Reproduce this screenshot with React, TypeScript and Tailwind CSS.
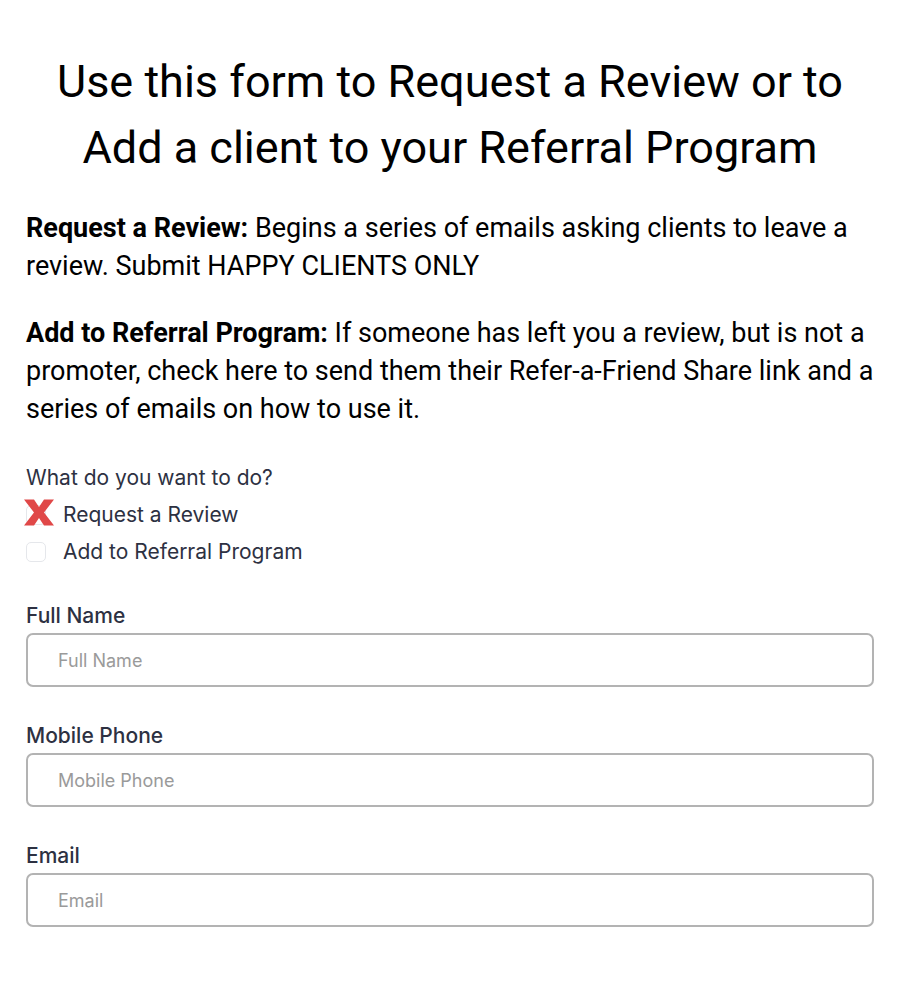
import { useState } from 'react';

const fields = [
    { id: 'name', label: 'Full Name', type: 'text' },
    { id: 'phone', label: 'Mobile Phone', type: 'tel' },
    { id: 'email', label: 'Email', type: 'email' },
];

const XMark = () => (
    <svg viewBox="0 0 30 26" className="absolute left-[-3px] top-[-7px] w-[30px] h-[27px]">
        <path d="M0 0 H10 L15 7.5 L20 0 H30 L20 13 L30 26 H20 L15 18.5 L10 26 H0 L10 13 Z" fill="#e04848" />
    </svg>
);

const App = () => {
    const [review, setReview] = useState(true);
    const [referral, setReferral] = useState(false);

    return (
        <div className="min-h-screen bg-white px-[26px] pt-[49px] pb-10">
            {/* Heading */}
            <h1 className="text-center font-['Roboto',sans-serif] text-[45px] leading-[66px] text-black">
                Use this form to Request a Review or to
                <br />
                Add a client to your Referral Program
            </h1>

            {/* Intro */}
            <div className="mt-[28px] font-['Roboto',sans-serif] text-[27px] leading-[38px] text-black space-y-[29px]">
                <p>
                    <strong className="font-bold">Request a Review:</strong> Begins a series of emails asking clients to leave a review. Submit HAPPY CLIENTS ONLY
                </p>
                <p>
                    <strong className="font-bold">Add to Referral Program:</strong> If someone has left you a review, but is not a promoter, check here to send them their Refer-a-Friend Share link and a series of emails on how to use it.
                </p>
            </div>

            {/* Options */}
            <div className="mt-[31px] font-['Inter',sans-serif] text-[21px] text-[#2d3142]">
                <p className="leading-[37px]">What do you want to do?</p>
                <label className="flex items-center gap-[17px] h-[37px] cursor-pointer" onClick={() => setReview(!review)}>
                    <span className="relative w-[20px] h-[20px] shrink-0 rounded-[5px] border border-[#e5e7eb]">
                        {review && <XMark />}
                    </span>
                    Request a Review
                </label>
                <label className="flex items-center gap-[17px] h-[37px] cursor-pointer" onClick={() => setReferral(!referral)}>
                    <span className="relative w-[20px] h-[20px] shrink-0 rounded-[5px] border border-[#e5e7eb]">
                        {referral && <XMark />}
                    </span>
                    Add to Referral Program
                </label>
            </div>

            {/* Fields */}
            <div className="mt-[30px] space-y-[33px] font-['Inter',sans-serif]">
                {fields.map((f) => (
                    <div key={f.id}>
                        <label htmlFor={f.id} className="block text-[21px] leading-[32px] font-medium text-[#2d3142]">
                            {f.label}
                        </label>
                        <input
                            id={f.id}
                            type={f.type}
                            placeholder={f.label}
                            className="mt-[1px] block w-full h-[54px] rounded-[7px] border-2 border-[#b3b3b3] px-[30px] text-[18px] text-[#333] placeholder-[#9a9a9a] outline-none"
                        />
                    </div>
                ))}
            </div>
        </div>
    );
};

export default App;
